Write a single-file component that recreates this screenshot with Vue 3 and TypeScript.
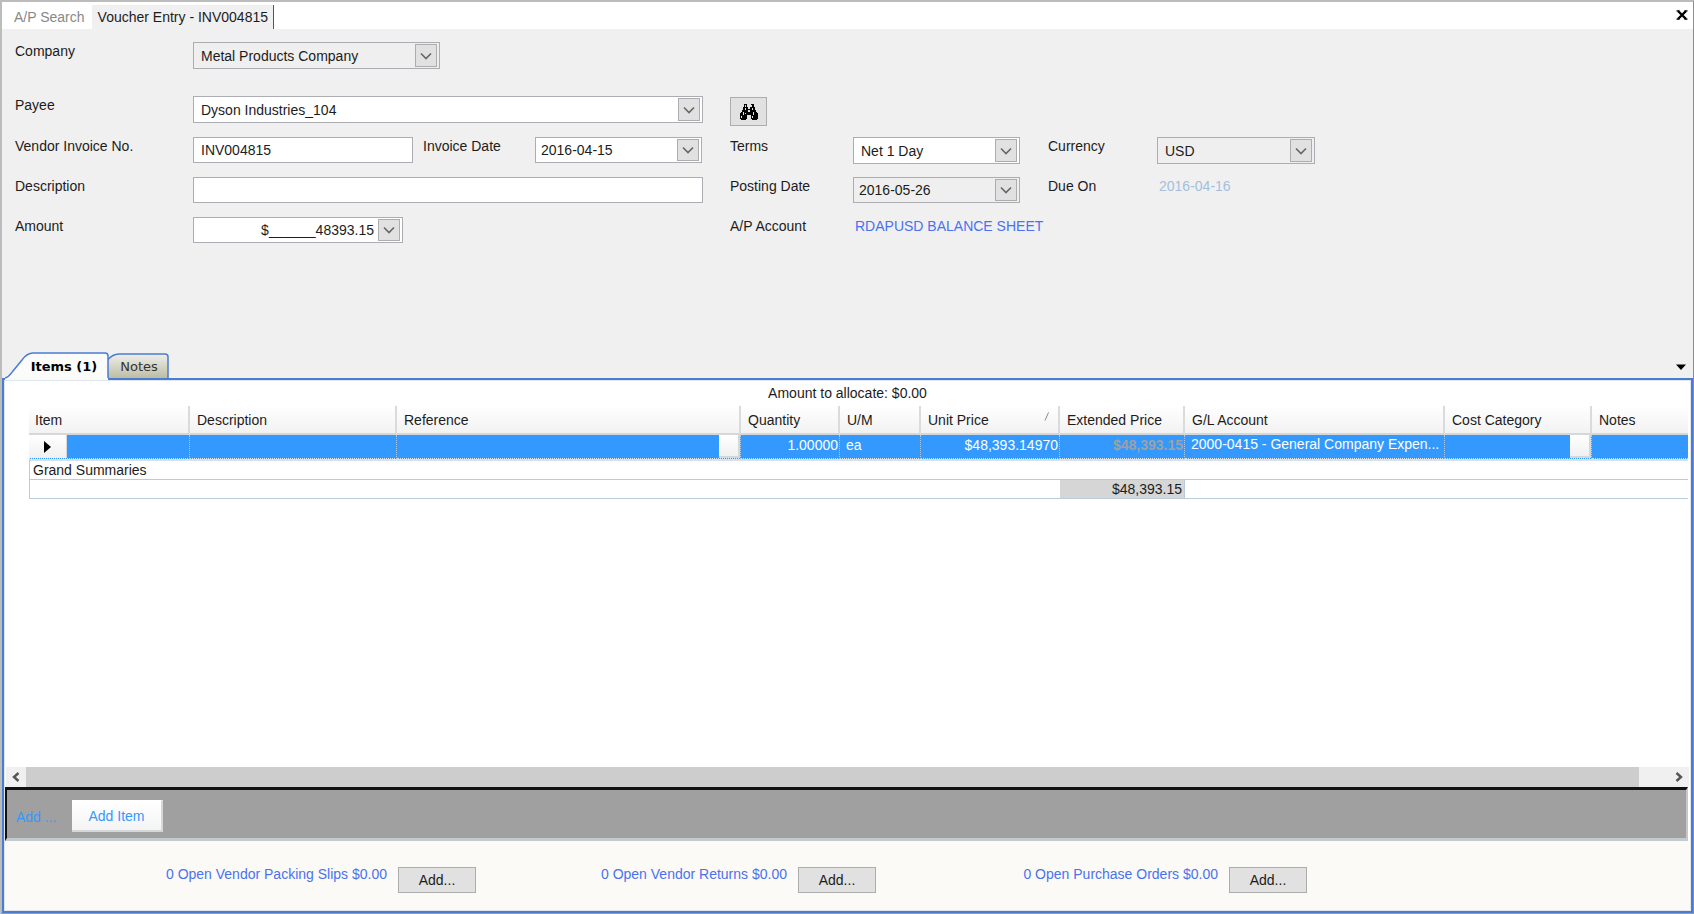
<script setup lang="ts">
import { ref } from 'vue'

interface Column {
  key: string
  label: string
}

interface OpenLink {
  label: string
}

const columns: Column[] = [
  { key: 'item', label: 'Item' },
  { key: 'description', label: 'Description' },
  { key: 'reference', label: 'Reference' },
  { key: 'quantity', label: 'Quantity' },
  { key: 'um', label: 'U/M' },
  { key: 'unit', label: 'Unit Price' },
  { key: 'extended', label: 'Extended Price' },
  { key: 'account', label: 'G/L Account' },
  { key: 'category', label: 'Cost Category' },
  { key: 'notes', label: 'Notes' },
]

const links: OpenLink[] = [
  { label: '0 Open Vendor Packing Slips $0.00' },
  { label: '0 Open Vendor Returns $0.00' },
  { label: '0 Open Purchase Orders $0.00' },
]

const invoiceNo = ref('INV004815')
const invoiceDate = ref('2016-04-15')
const postingDate = ref('2016-05-26')
const description = ref('')
const amount = ref('$______48393.15')
</script>

<template>
  <main class="window">
    <nav class="doc-tabs">
      <button type="button" class="doc-tab">A/P Search</button>
      <button type="button" class="doc-tab active">Voucher Entry - INV004815</button>
      <button type="button" class="close" aria-label="Close">
        <svg width="12" height="10" viewBox="0 0 12 10"><path d="M2 1L10 9M10 1L2 9" stroke="#000" stroke-width="2.4" /><path d="M.5 .8h3M8.5 .8h3M.5 9.2h3M8.5 9.2h3" stroke="#000" stroke-width="1.2" /></svg>
      </button>
    </nav>

    <form class="voucher" @submit.prevent>
      <label class="c1 r1" for="company">Company</label>
      <div class="field tall muted company r1">
        <select id="company"><option>Metal Products Company</option></select>
        <span class="drop"><svg width="12" height="8" viewBox="0 0 12 8"><path d="M1 1.5L6 6.5L11 1.5" /></svg></span>
      </div>

      <label class="c1 r2" for="payee">Payee</label>
      <div class="field tall wide r2">
        <select id="payee"><option>Dyson Industries_104</option></select>
        <span class="drop"><svg width="12" height="8" viewBox="0 0 12 8"><path d="M1 1.5L6 6.5L11 1.5" /></svg></span>
      </div>
      <button type="button" class="find r2" aria-label="Find payee">
        <svg width="20" height="16" viewBox="0 0 20 16">
          <path d="M5 0h3v3h1v2h2V3h1V0h3v3h1v3h1v2h1v1h1v6h-1v1h-5v-1h-1v-4H8v4H7v1H2v-1H1V9h1V8h1V6h1V3h1z" fill="#000" />
          <path d="M6 1h1v2H6zM12 1h1v2h-1zM6 4h1v2H6zM9 6h2v2H9zM13 4h1v2h-1zM4 8h1v3H4zM2 12h1v2H2zM15 8h-1v3h1zM13 12h1v2h-1zM6 9h1v1H6z" fill="#e1e1e1" />
        </svg>
      </button>

      <label class="c1 r3" for="invoice-no">Vendor Invoice No.</label>
      <div class="field invoice r3"><input id="invoice-no" v-model="invoiceNo" type="text" /></div>
      <label class="c3 r3" for="invoice-date">Invoice Date</label>
      <div class="field date c4 r3">
        <input id="invoice-date" v-model="invoiceDate" type="text" />
        <button type="button" class="drop" aria-label="Pick invoice date"><svg width="12" height="8" viewBox="0 0 12 8"><path d="M1 1.5L6 6.5L11 1.5" /></svg></button>
      </div>
      <label class="c5 r3" for="terms">Terms</label>
      <div class="field tall c6 r3">
        <select id="terms"><option>Net 1 Day</option></select>
        <span class="drop"><svg width="12" height="8" viewBox="0 0 12 8"><path d="M1 1.5L6 6.5L11 1.5" /></svg></span>
      </div>
      <label class="c7 r3" for="currency">Currency</label>
      <div class="field tall muted currency r3">
        <select id="currency"><option>USD</option></select>
        <span class="drop"><svg width="12" height="8" viewBox="0 0 12 8"><path d="M1 1.5L6 6.5L11 1.5" /></svg></span>
      </div>

      <label class="c1 r4" for="description">Description</label>
      <div class="field wide r4"><input id="description" v-model="description" type="text" /></div>
      <label class="c5 r4" for="posting-date">Posting Date</label>
      <div class="field date muted c6 r4">
        <input id="posting-date" v-model="postingDate" type="text" />
        <button type="button" class="drop" aria-label="Pick posting date"><svg width="12" height="8" viewBox="0 0 12 8"><path d="M1 1.5L6 6.5L11 1.5" /></svg></button>
      </div>
      <span class="c7 r4 text">Due On</span>
      <span class="c8 r4 text due">2016-04-16</span>

      <label class="c1 r5" for="amount">Amount</label>
      <div class="field amount r5">
        <input id="amount" v-model="amount" type="text" />
        <button type="button" class="drop" aria-label="Open calculator"><svg width="12" height="8" viewBox="0 0 12 8"><path d="M1 1.5L6 6.5L11 1.5" /></svg></button>
      </div>
      <span class="c5 r5 text">A/P Account</span>
      <a class="c6 r5 text account-link" href="#">RDAPUSD BALANCE SHEET</a>
    </form>

    <div class="sheet-tabs">
      <button type="button" class="sheet-tab items">
        <svg width="104" height="28" viewBox="0 0 104 28"><path d="M0 28V26C4 25 5 23 8 19L17 8Q22 1 28 1H100Q103 1 103 4V28z" fill="#fbfbf9" /><path d="M0 26C4 25 5 23 8 19L17 8Q22 1 28 1H100Q103 1 103 4V26" fill="none" stroke="#4a7cd0" stroke-width="1.5" /></svg>
        <span>Items (1)</span>
      </button>
      <button type="button" class="sheet-tab notes">
        <svg width="62" height="25" viewBox="0 0 62 25">
          <defs><linearGradient id="notes-fill" x1="0" y1="0" x2="0" y2="1"><stop offset="0" stop-color="#efefea" /><stop offset="1" stop-color="#bdbda5" /></linearGradient></defs>
          <path d="M0 25V8Q5 1 12 1H58Q61 1 61 4V25z" fill="url(#notes-fill)" /><path d="M0 8Q5 1 12 1H58Q61 1 61 4V25" fill="none" stroke="#4a7cd0" stroke-width="1.5" />
        </svg>
        <span>Notes</span>
      </button>
      <button type="button" class="tab-menu" aria-label="Tab list">
        <svg width="10" height="6" viewBox="0 0 10 6"><path d="M0 .5H10L5 6z" fill="#000" /></svg>
      </button>
    </div>

    <section class="panel">
      <div class="allocate">Amount to allocate: $0.00</div>
      <div class="grid-area">
        <table>
          <colgroup>
            <col v-for="c in columns" :key="c.key" :class="'w-' + c.key" />
          </colgroup>
          <thead>
            <tr>
              <th v-for="c in columns" :key="c.key" scope="col">
                <div class="head">
                  <span>{{ c.label }}</span>
                  <svg v-if="c.key === 'unit'" width="6" height="9" viewBox="0 0 6 9"><path d="M1 8.5L4.5 .5" stroke="#888" /></svg>
                </div>
              </th>
            </tr>
          </thead>
          <tbody>
            <tr>
              <td class="marker"><span><svg width="7" height="12" viewBox="0 0 7 12"><path d="M0 0L7 6L0 12z" fill="#000" /></svg></span></td>
              <td></td>
              <td class="picker"><button type="button" aria-label="Choose reference"></button></td>
              <td class="num">1.00000</td>
              <td>ea</td>
              <td class="num">$48,393.14970</td>
              <td class="num dim">$48,393.15</td>
              <td class="acct">2000-0415 - General Company Expen...</td>
              <td class="picker"><button type="button" aria-label="Choose cost category"></button></td>
              <td class="last"></td>
            </tr>
          </tbody>
          <tfoot>
            <tr class="summary-title"><td colspan="10">Grand Summaries</td></tr>
            <tr class="summary-row">
              <td colspan="6"></td>
              <td class="total">$48,393.15</td>
              <td colspan="3"></td>
            </tr>
          </tfoot>
        </table>
      </div>
      <div class="scrollbar">
        <button type="button" aria-label="Scroll left"><svg width="8" height="10" viewBox="0 0 8 10"><path d="M6.5 1L2 5L6.5 9" /></svg></button>
        <div class="thumb"></div>
        <button type="button" aria-label="Scroll right"><svg width="8" height="10" viewBox="0 0 8 10"><path d="M1.5 1L6 5L1.5 9" /></svg></button>
      </div>
      <div class="add-bar">
        <span>Add ...</span>
        <button type="button">Add Item</button>
      </div>
      <footer>
        <div v-for="l in links" :key="l.label" class="open">
          <a href="#">{{ l.label }}</a>
          <button type="button">Add...</button>
        </div>
      </footer>
    </section>
  </main>
</template>

<style>
body {
  margin: 0;
}
</style>

<style scoped>
* {
  box-sizing: border-box;
}

.window {
  display: flex;
  flex-direction: column;
  min-height: 100vh;
  border: 2px solid #bcbcbc;
  border-right: 1px solid #8c8c8c;
  border-bottom: 1px solid #9c9c98;
  background: #f0f0f0;
  color: #1c1c1c;
  font: 14px/18px "Liberation Sans", Arial, sans-serif;
}

button,
input,
select {
  margin: 0;
  padding: 0;
  border: 0;
  border-radius: 0;
  color: inherit;
  font: inherit;
}

a {
  color: #4a72f0;
  text-decoration: none;
}

.doc-tabs {
  display: flex;
  height: 27px;
  padding-top: 3px;
  background: #fff;
}

.doc-tab {
  padding: 0 7px 0 12px;
  background: #fff;
  color: #888;
}

.doc-tab.active {
  padding: 0 5px 0 6px;
  border-right: 1px solid #555;
  background: #f0f0f0;
  color: #1c1c1c;
}

.close {
  display: flex;
  align-items: center;
  margin-left: auto;
  padding: 0 5px 4px;
  background: none;
}

.voucher {
  display: grid;
  grid-template-columns: 178px 230px 112px 195px 123px 195px 109px 158px;
  grid-template-rows: 54px 41px 40px 40px 40px;
  align-items: start;
  min-height: 323px;
  padding: 13px 0 0 13px;
}

.c1 { grid-column: 1; }
.c3 { grid-column: 3; }
.c4 { grid-column: 4; }
.c5 { grid-column: 5; }
.c6 { grid-column: 6; }
.c7 { grid-column: 7; }
.c8 { grid-column: 8; }
.r1 { grid-row: 1; }
.r2 { grid-row: 2; }
.r3 { grid-row: 3; }
.r4 { grid-row: 4; }
.r5 { grid-row: 5; }

.field {
  display: flex;
  width: 167px;
  height: 26px;
  padding: 1px 2px 1px 1px;
  border: 1px solid #abadb3;
  background: #fff;
}

.field.tall { height: 27px; }

.field.muted {
  background: #efefef;
}

.company {
  grid-column: 2 / 4;
  width: 247px;
}

.field.wide {
  grid-column: 2 / 5;
  width: 510px;
}

.field.invoice {
  grid-column: 2;
  width: 220px;
}

.field.amount {
  grid-column: 2;
  width: 210px;
}

.field.currency {
  grid-column: 8;
  width: 158px;
}

.field input,
.field select {
  flex: 1;
  min-width: 0;
  padding-left: 6px;
  appearance: none;
  background: transparent;
  outline: 0;
}

.field.date input {
  padding-left: 4px;
}

.field.amount input {
  padding-right: 4px;
  text-align: right;
}

.drop {
  display: flex;
  flex: none;
  align-items: center;
  justify-content: center;
  width: 22px;
  border: 1px solid #adadad;
  background: #e1e1e1;
  pointer-events: none;
}

.drop path {
  fill: none;
  stroke: #666;
  stroke-width: 1.6;
}

.find {
  display: flex;
  grid-column: 5;
  align-items: center;
  justify-content: center;
  width: 37px;
  height: 29px;
  margin-top: 1px;
  border: 1px solid #adadad;
  background: #e1e1e1;
}

.due {
  padding-left: 2px;
  color: #a3bfdd;
}

.account-link {
  grid-column: 6 / 9;
  padding-left: 2px;
}

.sheet-tabs {
  display: flex;
  align-items: flex-end;
  height: 26px;
  padding-left: 3px;
}

.sheet-tab {
  position: relative;
  height: 25px;
  background: none;
  font: 13px/18px "DejaVu Sans", Verdana, sans-serif;
}

.sheet-tab svg {
  position: absolute;
  bottom: 0;
  left: 0;
}

.sheet-tab span {
  position: relative;
}

.items {
  z-index: 1;
  width: 102px;
  padding: 2px 0 0 16px;
  color: #000;
  font-weight: bold;
}

.sheet-tab.items svg {
  bottom: -2px;
}

.notes {
  width: 62px;
  padding: 2px 0 0 2px;
  color: #333;
}

.tab-menu {
  margin: 0 7px 8px auto;
  background: none;
  line-height: 0;
}

.panel {
  display: flex;
  flex: 1;
  flex-direction: column;
  border: 2px solid #4a7cd0;
  background: #fff;
  box-shadow: inset 0 0 0 1px #dfe6f0;
}

.allocate {
  height: 26px;
  padding-top: 4px;
  text-align: center;
}

.grid-area {
  flex: 1;
  padding: 0 3px 0 25px;
}

table {
  width: 100%;
  border-collapse: separate;
  border-spacing: 0;
  table-layout: fixed;
}

.w-item { width: 161px; }
.w-description { width: 207px; }
.w-reference { width: 344px; }
.w-quantity { width: 99px; }
.w-um { width: 81px; }
.w-unit { width: 139px; }
.w-extended { width: 125px; }
.w-account { width: 260px; }
.w-category { width: 147px; }

th,
td {
  padding: 0;
  font-weight: normal;
  text-align: left;
  white-space: nowrap;
}

th {
  height: 29px;
  border-right: 2px solid #d9dcdc;
  border-bottom: 2px solid #d4d8d8;
  background: linear-gradient(#fff, #f2f2f2);
}

th:last-child {
  border-right: 0;
}

.head {
  display: flex;
  justify-content: space-between;
  padding: 0 8px 0 7px;
}

th:first-child .head {
  padding-left: 6px;
}

.head svg {
  margin-top: 1px;
}

tbody td {
  height: 24px;
  padding: 0 1px 4px 6px;
  border-right: 1px dotted #a9cdf2;
  border-bottom: 1px dotted #d6e6f6;
  background: #3399ff;
  color: #fff;
}

tbody td.marker {
  padding: 0;
}

.marker span {
  display: flex;
  align-items: center;
  justify-content: center;
  width: 38px;
  height: 23px;
  border-right: 1px solid #d4d8d8;
  background: linear-gradient(#fff, #f0f0f0);
}

tbody td.picker {
  padding: 0;
}

.picker button {
  display: block;
  width: 21px;
  height: 23px;
  margin-left: auto;
  border-right: 2px solid #d4d8d8;
  border-bottom: 2px solid #d4d8d8;
  background: linear-gradient(#fff, #f0f0f0);
}

tbody td.last {
  border-right: 0;
}

tbody td.num {
  text-align: right;
}

tbody td.dim {
  color: #a0a0a0;
  font-weight: bold;
}

tbody td.acct {
  padding-bottom: 5px;
}

.summary-title td {
  height: 21px;
  padding-left: 3px;
  border-top: 2px solid #d9e2ea;
  border-bottom: 1px solid #bccbdb;
  border-left: 1px solid #bccbdb;
}

.summary-row td {
  height: 18px;
  border-bottom: 1px solid #bccbdb;
}

.summary-row td:first-child {
  border-left: 1px solid #bccbdb;
}

.summary-row .total {
  padding-right: 2px;
  border-right: 1px solid #bccbdb;
  background: #d6d6d6;
  text-align: right;
}

.scrollbar {
  display: flex;
  height: 20px;
  margin: 0 2px;
  background: #f0f0f0;
}

.scrollbar button {
  width: 20px;
  background: #f0f0f0;
}

.scrollbar path {
  fill: none;
  stroke: #555;
  stroke-width: 2.4;
}

.thumb {
  flex: 1;
  margin-right: 30px;
  background: #cdcdcd;
}

.add-bar {
  display: flex;
  align-items: center;
  height: 54px;
  margin: 0 3px 0 1px;
  padding: 3px 0 0 9px;
  border-top: 3px solid #111;
  border-right: 2px solid #c4c8c8;
  border-bottom: 3px solid #c3cbce;
  border-left: 2px solid #111;
  background: #a0a0a0;
  color: #3399ff;
}

.add-bar span {
  width: 56px;
  padding-top: 3px;
}

.add-bar button {
  width: 91px;
  height: 32px;
  padding-top: 2px;
  border-top: 1px solid #fff;
  border-right: 2px solid #d4d8d8;
  border-bottom: 2px solid #d4d8d8;
  background: linear-gradient(#fff, #f4f4f4);
}

footer {
  display: grid;
  grid-template-columns: 471px 400px 431px;
  height: 69px;
  margin: 0 1px 1px;
  padding-top: 26px;
  background: #fbfaf7;
}

.open {
  display: flex;
  align-items: flex-start;
  justify-content: flex-end;
  gap: 11px;
}

.open a {
  margin-top: -2px;
}

.open button {
  width: 78px;
  height: 26px;
  border: 1px solid #adadad;
  background: #e1e1e1;
}
</style>
